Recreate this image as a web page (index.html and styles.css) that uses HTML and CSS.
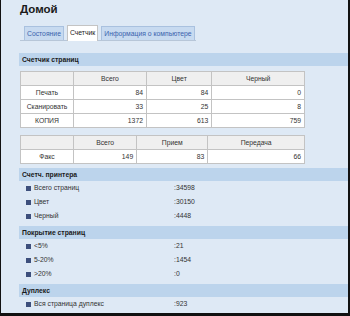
FILE: index.html
```html
<!DOCTYPE html>
<html>
<head>
    <meta charset="utf-8" />
    <title>Счетчик</title>
    <link rel="stylesheet" href="styles.css">
</head>
<body>
    <div class="marco">
        <h1 class="titulo">Домой</h1>

        <ul class="pestanas">
            <li><a href="#">Состояние</a></li>
            <li class="activa"><a href="#">Счетчик</a></li>
            <li><a href="#">Информация о компьютере</a></li>
        </ul>

        <div class="barra barraPrimera">Счетчик страниц</div>

        <table class="contador">
            <tr class="cabecera"><td></td><td>Всего</td><td>Цвет</td><td>Черный</td></tr>
            <tr><td class="nombre">Печать</td><td>84</td><td>84</td><td>0</td></tr>
            <tr><td class="nombre">Сканировать</td><td>33</td><td>25</td><td>8</td></tr>
            <tr><td class="nombre">КОПИЯ</td><td>1372</td><td>613</td><td>759</td></tr>
        </table>

        <table class="contador fax">
            <tr class="cabecera"><td></td><td>Всего</td><td>Прием</td><td>Передача</td></tr>
            <tr><td class="nombre">Факс</td><td>149</td><td>83</td><td>66</td></tr>
        </table>

        <div class="barra">Счетч. принтера</div>
        <ul class="lista">
            <li><span class="etiqueta">Всего страниц</span><span>:34598</span></li>
            <li><span class="etiqueta">Цвет</span><span>:30150</span></li>
            <li><span class="etiqueta">Черный</span><span>:4448</span></li>
        </ul>

        <div class="barra">Покрытие страниц</div>
        <ul class="lista">
            <li><span class="etiqueta">&lt;5%</span><span>:21</span></li>
            <li><span class="etiqueta">5-20%</span><span>:1454</span></li>
            <li><span class="etiqueta">&gt;20%</span><span>:0</span></li>
        </ul>

        <div class="barra">Дуплекс</div>
        <ul class="lista">
            <li><span class="etiqueta">Вся страница дуплекс</span><span>:923</span></li>
        </ul>
    </div>
</body>
</html>
```

FILE: styles.css
```css
body {
    margin: 0;
    font-family: "Liberation Sans", Arial, sans-serif;
    font-size: 6.8px;
    color: #333333;
}
.marco {
    box-sizing: border-box;
    width: 350px;
    height: 316px;
    overflow: hidden;
    background-color: #dee9f5;
    border-left: 1px solid #111111;
    border-right: 2px solid #111111;
    border-bottom: 3px solid #111111;
}
.titulo {
    margin: 0;
    padding: 3px 0 0 19px;
    height: 23px;
    box-sizing: border-box;
    font-size: 11.5px;
    font-weight: bold;
    color: #1a1a1a;
}
.pestanas {
    list-style: none;
    margin: 0 0 0 19px;
    padding: 0 0 0 4px;
    width: 172px;
    height: 17px;
    display: flex;
    gap: 3px;
    border-bottom: 1px solid #b7c6d8;
}
.pestanas li {
    flex-shrink: 0;
    white-space: nowrap;
    margin-top: 3px;
    height: 14px;
    box-sizing: border-box;
    border: 1px solid #a9c1df;
    border-bottom: none;
    background-color: #c7daf0;
    padding: 0 2px;
    line-height: 13px;
}
.pestanas a {
    color: #3a62ad;
    text-decoration: none;
}
.pestanas .activa {
    background-color: #ffffff;
    border-color: #c4c4c4;
    margin-top: 2px;
    height: 16px;
}
.pestanas .activa a {
    color: #1a1a1a;
}
.barra {
    margin-left: 18px;
    height: 13px;
    line-height: 13px;
    padding-left: 3px;
    background-color: #bcd4ec;
    font-weight: bold;
    color: #1a1a1a;
}
.barraPrimera {
    margin-top: 12px;
}
.contador {
    margin: 5px 0 0 19px;
    width: 285px;
    border-collapse: collapse;
    color: #333333;
}
.contador td {
    border: 1px solid #c3c3c3;
    height: 13px;
    padding: 0 3px;
    background-color: #ffffff;
    text-align: right;
}
.contador td:first-child {
    width: 46px;
}
.contador .cabecera td {
    background-color: #efefef;
    text-align: center;
}
.contador .nombre {
    text-align: center;
}
.fax {
    margin-top: 7px;
    margin-bottom: 4px;
}
.lista {
    list-style: none;
    margin: 0 0 3px 0;
    padding: 0 0 0 25px;
}
.lista li {
    height: 14px;
    line-height: 14px;
    display: flex;
    align-items: center;
}
.lista li:before {
    content: "";
    width: 5px;
    height: 5px;
    margin-right: 3px;
    background-color: #3d4f7c;
}
.etiqueta {
    width: 140px;
}
```
